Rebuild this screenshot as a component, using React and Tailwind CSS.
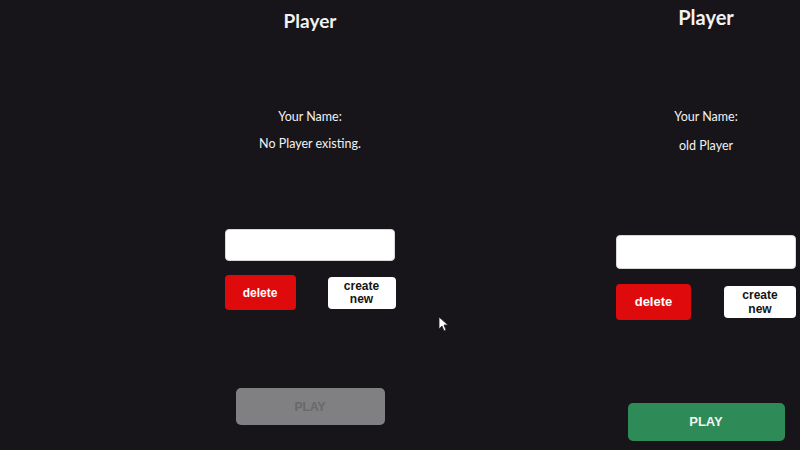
export default function App() {
  const sans = { fontFamily: 'Lato, "Open Sans", sans-serif' };
  return (
    <div className="relative w-[800px] h-[450px] overflow-hidden bg-[#171519] flex flex-row text-[#f2f2f2]">
      {/* Left panel */}
      <div className="w-[612px] pl-[8px] flex flex-col items-center">
        <div className="mt-[9px] h-[24px] leading-[24px] text-[19px] font-bold" style={sans}>Player</div>
        <div className="mt-[75px] h-[18px] leading-[18px] text-[12.5px]" style={sans}>Your Name:</div>
        <div className="mt-[9px] h-[18px] leading-[18px] text-[12.5px]" style={sans}>No Player existing.</div>
        <div className="mt-[76px] w-[170px] h-[32px] bg-white rounded-[4px] border border-[#d8d8d8]"></div>
        <div className="mt-[14px] w-[171px] h-[35px] flex flex-row items-center justify-between font-['Liberation_Sans',sans-serif] font-bold">
          <div className="w-[71px] h-[35px] rounded-[4px] bg-[#df0a0c] flex items-center justify-center text-white text-[12px]">delete</div>
          <div className="w-[68px] h-[32px] rounded-[4px] bg-white flex flex-col items-center justify-center text-[#141414] text-[12px] leading-[13px] text-center">
            <span>create</span>
            <span>new</span>
          </div>
        </div>
        <div className="mt-[78px] w-[149px] h-[37px] rounded-[5px] bg-[#807f82] flex items-center justify-center text-[#69686b] text-[12px] font-bold font-['Liberation_Sans',sans-serif]">PLAY</div>
      </div>
      {/* Right panel */}
      <div className="w-[188px] flex flex-col items-center">
        <div className="mt-[4px] h-[26px] leading-[26px] text-[20px] font-bold" style={sans}>Player</div>
        <div className="mt-[78px] h-[18px] leading-[18px] text-[12.5px]" style={sans}>Your Name:</div>
        <div className="mt-[11px] h-[18px] leading-[18px] text-[12.5px]" style={sans}>old Player</div>
        <div className="mt-[80px] w-[180px] h-[34px] bg-white rounded-[4px] border border-[#d8d8d8]"></div>
        <div className="mt-[15px] w-[180px] h-[36px] flex flex-row items-center justify-between font-['Liberation_Sans',sans-serif] font-bold">
          <div className="w-[75px] h-[36px] rounded-[4px] bg-[#df0a0c] flex items-center justify-center text-white text-[13px]">delete</div>
          <div className="w-[72px] h-[32px] rounded-[4px] bg-white flex flex-col items-center justify-center text-[#141414] text-[12px] leading-[14px] text-center">
            <span>create</span>
            <span>new</span>
          </div>
        </div>
        <div className="mt-[83px] w-[157px] h-[38px] rounded-[5px] bg-[#2e8a56] flex items-center justify-center text-[#eef5f0] text-[13px] font-bold font-['Liberation_Sans',sans-serif]">PLAY</div>
      </div>
      {/* Mouse cursor */}
      <svg className="absolute left-[438px] top-[316px]" width="11" height="16" viewBox="0 0 11 16">
        <path d="M1 1 L1 13 L4 10 L6 15 L8 14 L6 9 L10 9 Z" fill="#ffffff" stroke="#222" strokeWidth="0.8" />
      </svg>
    </div>
  );
}
